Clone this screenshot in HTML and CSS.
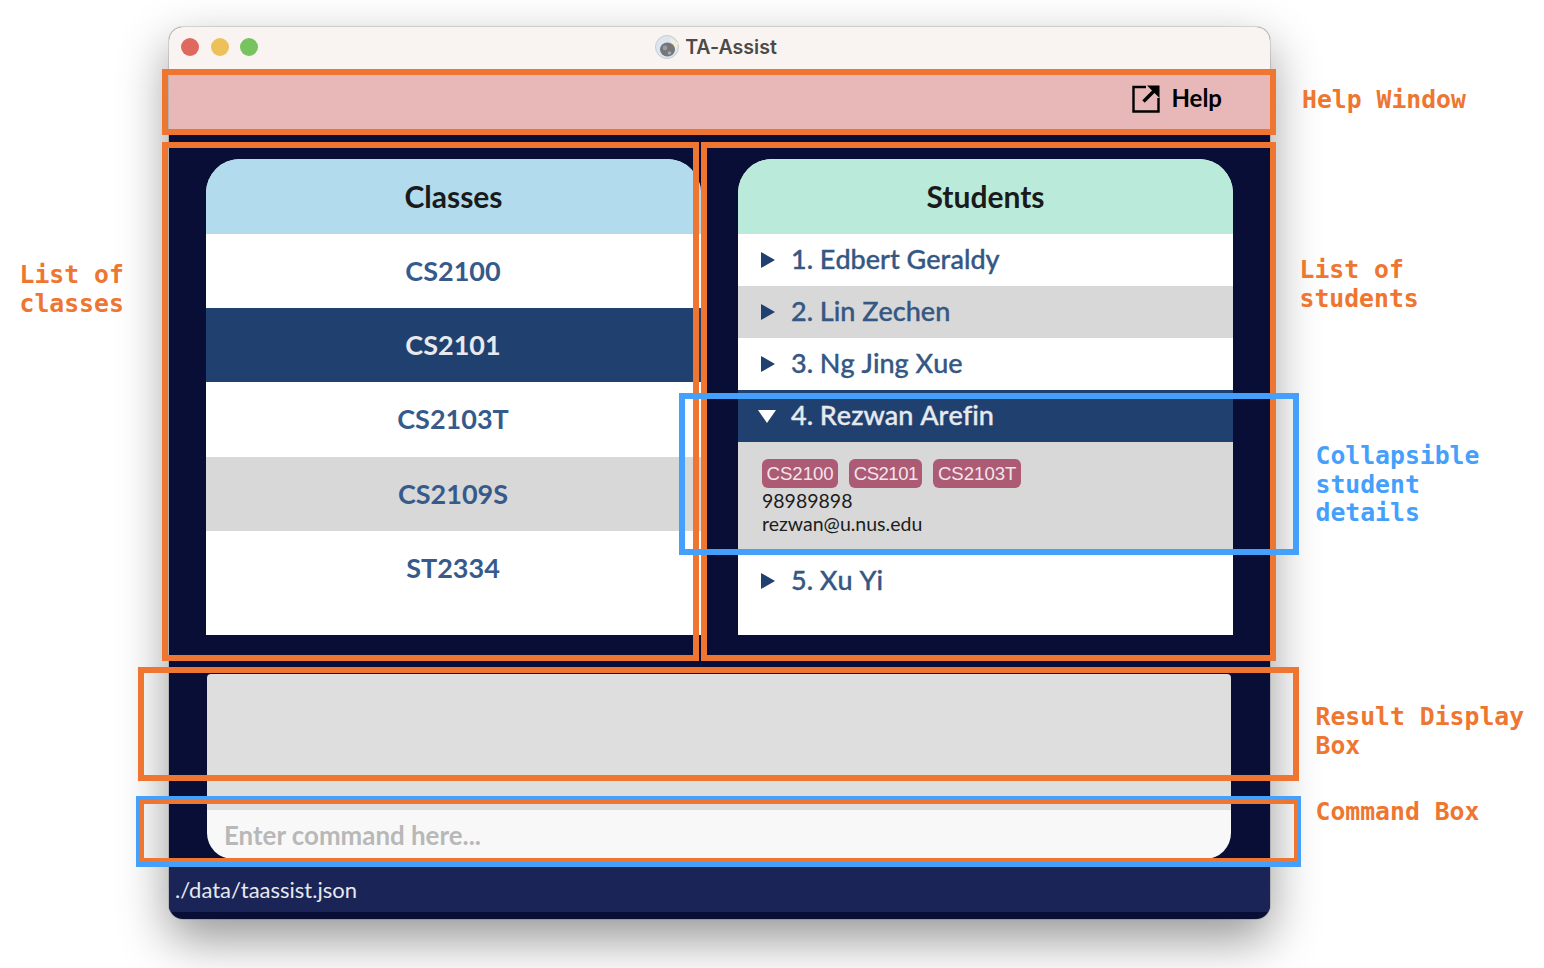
FILE: index.html
```html
<!DOCTYPE html>
<html>
<head>
  <title>TA-Assist</title>
  <link rel="stylesheet" href="styles.css">
</head>
<body>
  <div class="window">
    <div class="titlebar">
      <div class="lights">
        <span class="light light-red"></span>
        <span class="light light-yellow"></span>
        <span class="light light-green"></span>
      </div>
      <div class="app-title">
        <svg class="app-icon" width="24" height="24" viewBox="0 0 24 24">
          <circle cx="12" cy="12" r="11.5" fill="#dde6ee" stroke="#c4ccd2" stroke-width="1"/>
          <path d="M15 3 L23 8 L21 15 L17 10 Z" fill="#f3efd6"/>
          <ellipse cx="12.5" cy="14.5" rx="7.5" ry="7" fill="#74767c"/>
          <circle cx="10" cy="13" r="2.4" fill="#9a9ca2"/>
          <circle cx="14.5" cy="18" r="1.8" fill="#a6a8ad"/>
        </svg>
        <span>TA-Assist</span>
      </div>
    </div>

    <div class="menubar">
      <div class="help-item">
        <svg width="28" height="28" viewBox="0 0 28 28">
          <path d="M14 2 H1.5 V26.5 H26.5 V13" fill="none" stroke="#000" stroke-width="2.4"/>
          <path d="M11.5 16.5 L22 6" fill="none" stroke="#000" stroke-width="3.4"/>
          <path d="M15 0.5 H27.5 V13 Z" fill="#000"/>
        </svg>
        <span class="help-label">Help</span>
      </div>
    </div>

    <div class="lists">
      <div class="card">
        <div class="card-head head-classes">Classes</div>
        <div class="card-body">
          <div class="class-row">CS2100</div>
          <div class="class-row is-selected">CS2101</div>
          <div class="class-row">CS2103T</div>
          <div class="class-row is-grey">CS2109S</div>
          <div class="class-row">ST2334</div>
        </div>
      </div>

      <div class="card">
        <div class="card-head head-students">Students</div>
        <div class="card-body">
          <div class="student-row"><span class="arrow"></span>1. Edbert Geraldy</div>
          <div class="student-row is-grey"><span class="arrow"></span>2. Lin Zechen</div>
          <div class="student-row"><span class="arrow"></span>3. Ng Jing Xue</div>
          <div class="student-row is-selected"><span class="arrow-down"></span>4. Rezwan Arefin</div>
          <div class="student-details">
            <div class="chips">
              <span class="chip">CS2100</span>
              <span class="chip chip-tight">CS2101</span>
              <span class="chip">CS2103T</span>
            </div>
            <div class="detail-line">98989898</div>
            <div class="detail-line">rezwan@u.nus.edu</div>
          </div>
          <div class="student-row"><span class="arrow"></span>5. Xu Yi</div>
        </div>
      </div>
    </div>

    <div class="result-box"></div>
    <div class="command-box">Enter command here...</div>
    <div class="status-wrap">
      <div class="status-bar">./data/taassist.json</div>
    </div>
  </div>

  <!-- annotation frames -->
  <div class="frame frame-help"></div>
  <div class="frame frame-classes"></div>
  <div class="frame frame-students"></div>
  <div class="frame frame-details"></div>
  <div class="frame frame-result"></div>
  <div class="frame frame-cmd-blue"></div>
  <div class="frame frame-cmd"></div>

  <div class="note note-help">Help Window</div>
  <div class="note note-classes">List of<br>classes</div>
  <div class="note note-students">List of<br>students</div>
  <div class="note note-details">Collapsible<br>student<br>details</div>
  <div class="note note-result">Result Display<br>Box</div>
  <div class="note note-cmd">Command Box</div>
</body>
</html>
```

FILE: styles.css
```css
html, body {
  margin: 0;
  height: 968px;
  overflow: hidden;
  background: #fff;
}
body {
  padding: 27px 0 0 169px;
  box-sizing: border-box;
  font-family: Lato, sans-serif;
  font-variant-ligatures: none;
}
.window {
  width: 1101px;
  height: 892px;
  display: flex;
  flex-direction: column;
  background: #090e36;
  border-radius: 14px;
  overflow: hidden;
  box-shadow: 0 0 0 1px rgba(0, 0, 0, 0.12), 0 20px 50px rgba(0, 0, 0, 0.42);
}
.titlebar {
  height: 48px;
  flex: none;
  display: flex;
  align-items: center;
  justify-content: center;
  position: relative;
  background: #f9f4f1;
}
.lights {
  position: absolute;
  left: 12px;
  top: 11px;
  display: flex;
  gap: 11.5px;
}
.light {
  width: 18px;
  height: 18px;
  border-radius: 50%;
}
.light-red { background: #e0695f; }
.light-yellow { background: #eec05a; }
.light-green { background: #77c35f; }
.app-title {
  display: flex;
  align-items: center;
  gap: 6px;
  font-family: Inter, sans-serif;
  font-size: 19.6px;
  font-weight: 600;
  color: #4c4a49;
  margin-left: -7px;
  margin-top: -9px;
}
.menubar {
  height: 55px;
  flex: none;
  box-sizing: border-box;
  padding-bottom: 8px;
  display: flex;
  justify-content: flex-end;
  background: #e8b8b8;
}
.help-item {
  display: flex;
  align-items: center;
  gap: 11px;
  margin-right: 48px;
  font-size: 24px;
  font-weight: 700;
  color: #000;
}
.help-label { margin-bottom: 2px; }
.lists {
  height: 544px;
  flex: none;
  box-sizing: border-box;
  display: flex;
  gap: 37px;
  padding: 29px 0 0 37px;
}
.card {
  width: 495px;
  height: 476px;
  display: flex;
  flex-direction: column;
  background: #fff;
  border-radius: 34px 34px 0 0;
  overflow: hidden;
}
.card-head {
  height: 75px;
  flex: none;
  box-sizing: border-box;
  padding-bottom: 2px;
  display: flex;
  align-items: center;
  justify-content: center;
  font-size: 30px;
  font-weight: 700;
  color: #1a1a1a;
}
.head-classes { background: #b2dcee; }
.head-students { background: #baead9; }
.class-row {
  height: 74.2px;
  box-sizing: border-box;
  padding: 0 1px 1px 0;
  display: flex;
  align-items: center;
  justify-content: center;
  font-size: 27px;
  font-weight: 700;
  color: #375a8a;
}
.student-row {
  height: 52px;
  display: flex;
  align-items: center;
  box-sizing: border-box;
  padding: 0 0 4px 53px;
  position: relative;
  font-size: 27px;
  font-weight: 500;
  font-kerning: none;
  -webkit-text-stroke: 0.35px currentColor;
  color: #355783;
}
.is-grey { background: #d8d8d8; }
.is-selected { background: #20406f; color: #e6e9ee; }
.arrow {
  position: absolute;
  left: 23px;
  top: 18px;
  border-left: 14px solid #20406f;
  border-top: 8px solid transparent;
  border-bottom: 8px solid transparent;
}
.arrow-down {
  position: absolute;
  left: 20px;
  top: 20px;
  border-top: 13px solid #fff;
  border-left: 9px solid transparent;
  border-right: 9px solid transparent;
}
.student-details {
  height: 113px;
  box-sizing: border-box;
  padding: 17px 0 0 24px;
  background: #d8d8d8;
  color: #1c1c1c;
  font-size: 19.5px;
  line-height: 24px;
}
.chips {
  display: flex;
  gap: 11px;
  margin-bottom: 1px;
}
.chip {
  height: 29px;
  box-sizing: border-box;
  padding: 0 4.5px;
  display: flex;
  align-items: center;
  background: #ad5a75;
  border-radius: 6px;
  font-family: "Liberation Sans", sans-serif;
  font-size: 18.6px;
  color: #f2e6ea;
}
.chip-tight { letter-spacing: -0.5px; }
.detail-line + .detail-line { margin-top: -1px; }
.result-box {
  height: 136px;
  flex: none;
  margin: 0 39px 0 38px;
  background: #dedede;
  border-radius: 4px 4px 0 0;
}
.command-box {
  height: 49px;
  flex: none;
  margin: 0 39px 0 38px;
  padding-left: 17px;
  display: flex;
  align-items: center;
  background: #f8f8f8;
  border-radius: 0 0 26px 26px;
  font-size: 25.9px;
  font-weight: 700;
  color: #b8b8b8;
}
.status-wrap {
  flex: 1;
  padding-top: 8px;
}
.status-bar {
  height: 45px;
  box-sizing: border-box;
  padding-left: 6px;
  display: flex;
  align-items: center;
  background: #1a2456;
  color: #e6e8ef;
  font-size: 22px;
}

/* annotations, drawn over the screenshot */
.frame {
  position: absolute;
  box-sizing: border-box;
  border: 6px solid #ee7630;
}
.frame-help { left: 162px; top: 69px; width: 1114px; height: 66px; }
.frame-classes { left: 162px; top: 142px; width: 537px; height: 519px; }
.frame-students { left: 701px; top: 142px; width: 575px; height: 519px; }
.frame-details { left: 679px; top: 393px; width: 620px; height: 162px; border-color: #45a0fb; }
.frame-result { left: 138px; top: 667px; width: 1161px; height: 114px; }
.frame-cmd-blue { left: 136px; top: 796px; width: 1165px; height: 71px; border: 5px solid #45a0fb; }
.frame-cmd { left: 140px; top: 800px; width: 1158px; height: 62px; border-width: 4px; }
.note {
  position: absolute;
  font-family: "DejaVu Sans Mono", monospace;
  font-size: 24.75px;
  font-weight: 700;
  line-height: 28.5px;
  color: #ee7630;
  white-space: nowrap;
}
.note-help { left: 1302px; top: 86px; }
.note-classes { left: 19.5px; top: 261px; }
.note-students { left: 1299.5px; top: 256px; }
.note-details { left: 1315.5px; top: 442px; color: #45a0fb; }
.note-result { left: 1315.5px; top: 703px; }
.note-cmd { left: 1315.5px; top: 798px; }
```
